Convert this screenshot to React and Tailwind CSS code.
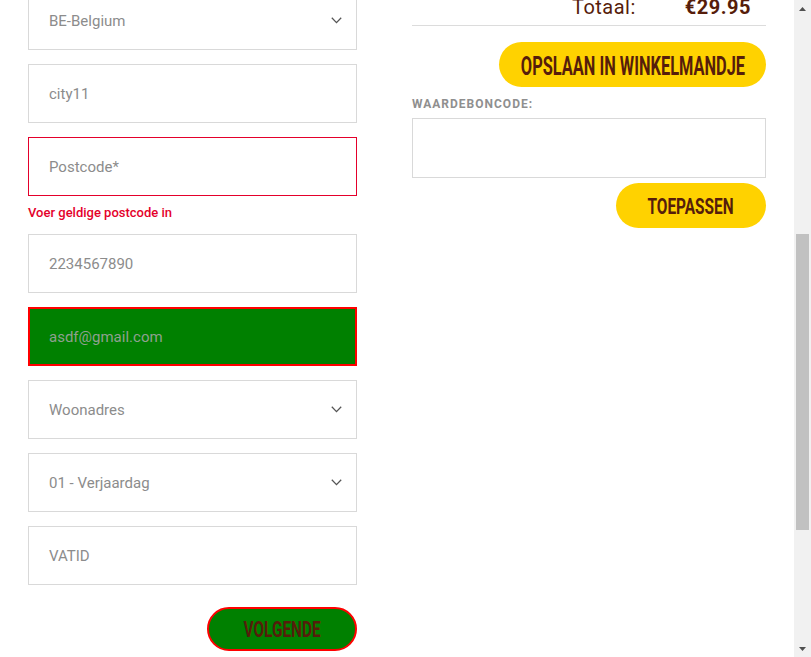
import { useLayoutEffect, useRef } from 'react';

const inputBase =
    'flex h-[59px] w-full items-center border border-[#d9d9d9] bg-white pl-[20px] pr-[14px] pt-[2px] text-[15px] text-[#8c8c8c]';

function Chevron() {
    return (
        <svg width="11" height="7" viewBox="0 0 11 7" fill="none" className="ml-auto -mt-[2px]">
            <polyline points="0.8,0.8 5.5,5.6 10.2,0.8" stroke="#555" strokeWidth="1.3" />
        </svg>
    );
}

function Field({ label, select = false, className = '' }) {
    return (
        <div className={`${inputBase} ${className}`.trim()}>
            <span>{label}</span>
            {select ? <Chevron /> : null}
        </div>
    );
}

function PillButton({ children, className = '', textClass = '' }) {
    return (
        <button
            type="button"
            className={`flex items-center justify-center whitespace-nowrap rounded-full text-[#561d0b] ${className}`.trim()}
        >
            <span className={`inline-block font-bold uppercase leading-none ${textClass}`.trim()}>{children}</span>
        </button>
    );
}

function Scrollbar() {
    return (
        <div className="flex w-[17px] shrink-0 flex-col bg-[#f1f1f1]">
            <div className="flex h-[17px] items-center justify-center">
                <svg width="7" height="4" viewBox="0 0 7 4">
                    <polygon points="3.5,0 7,4 0,4" fill="#505050" />
                </svg>
            </div>
            <div className="flex-1 px-[2px] pt-[217px]">
                <div className="h-[296px] w-full bg-[#c1c1c1]" />
            </div>
            <div className="flex h-[17px] items-center justify-center">
                <svg width="7" height="4" viewBox="0 0 7 4">
                    <polygon points="0,0 7,0 3.5,4" fill="#505050" />
                </svg>
            </div>
        </div>
    );
}

export default function App() {
    const scroller = useRef(null);

    useLayoutEffect(() => {
        if (scroller.current) scroller.current.scrollTop = 482;
    }, []);

    // fields above the fold (scrolled out of view)
    const hiddenFields = [1, 2, 3, 4, 5, 6];

    return (
        <div className="flex h-[657px] bg-white font-['Roboto',sans-serif]">
            <div ref={scroller} className="h-full flex-1 overflow-hidden">
                <div className="flex h-[1383px] px-[28px]">
                    {/* left: address form */}
                    <div className="flex w-[329px] flex-col pt-[35px]">
                        {hiddenFields.map((f) => (
                            <Field key={f} label="" className="mb-[14px]" />
                        ))}
                        <Field label="BE-Belgium" select className="mb-[14px]" />
                        <Field label="city11" className="mb-[14px]" />
                        <Field label="Postcode*" className="mb-[8px] border-[#e4002b]" />
                        <p className="mb-[12px] text-[13px] font-medium leading-[18px] text-[#e4002b]">
                            Voer geldige postcode in
                        </p>
                        <Field label="2234567890" className="mb-[14px]" />
                        <div className="mb-[14px] flex h-[59px] w-full items-center border-2 border-[#ff0000] bg-[#008000] pl-[19px] pt-[2px] text-[15px] text-[#8fa08f]">
                            asdf@gmail.com
                        </div>
                        <Field label="Woonadres" select className="mb-[14px]" />
                        <Field label="01 - Verjaardag" select className="mb-[14px]" />
                        <Field label="VATID" />
                        <div className="mt-[22px] flex justify-end">
                            <PillButton
                                className="h-[44px] w-[150px] border-2 border-[#ff0000] bg-[#008000]"
                                textClass="mt-[2px] scale-x-[0.7] text-[22px]"
                            >
                                Volgende
                            </PillButton>
                        </div>
                    </div>

                    {/* right: cart summary */}
                    <div className="ml-[55px] flex w-[354px] flex-col">
                        <div className="h-[466px]" />
                        <div className="flex h-[42px] items-end justify-end gap-[49px] border-b border-[#dcdcdc] pb-[5px] pr-[15px] text-[20px] leading-[26px] tracking-[0.5px] text-[#561d0b]">
                            <span>Totaal:</span>
                            <span className="font-bold">€29.95</span>
                        </div>
                        <div className="mt-[16px] flex justify-end">
                            <PillButton className="h-[45px] w-[267px] bg-[#ffd200]" textClass="mt-[2px] scale-x-[0.63] text-[26px]">
                                Opslaan in winkelmandje
                            </PillButton>
                        </div>
                        <label className="mt-[10px] text-[12px] font-bold uppercase leading-[14px] tracking-[1px] text-[#8f8f8f]">
                            Waardeboncode:
                        </label>
                        <div className="mt-[7px] h-[60px] w-full border border-[#d9d9d9]" />
                        <div className="mt-[5px] flex justify-end">
                            <PillButton className="h-[45px] w-[150px] bg-[#ffd200]" textClass="mt-[2px] scale-x-[0.7] text-[22px]">
                                Toepassen
                            </PillButton>
                        </div>
                    </div>
                </div>
            </div>
            <Scrollbar />
        </div>
    );
}
